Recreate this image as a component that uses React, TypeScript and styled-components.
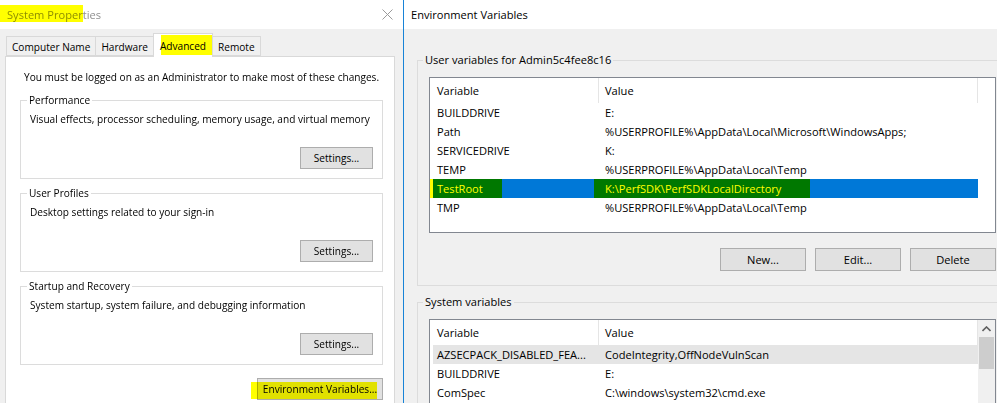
import React from "react";
import styled, { createGlobalStyle } from "styled-components";

const GlobalStyle = createGlobalStyle`
  html, body {
    margin: 0;
    padding: 0;
  }
  body {
    width: 997px;
    height: 403px;
    overflow: hidden;
    background: #f0f0f0;
    font-family: "Open Sans", "Liberation Sans", Arial, sans-serif;
    font-size: 11px;
    color: #000;
  }
  * {
    box-sizing: border-box;
  }
`;

const Screen = styled.div`
  display: flex;
  width: 997px;
  height: 403px;
  overflow: hidden;
`;

const Window = styled.div<{ $width: number; $fontSize: number; $active?: boolean }>`
  position: relative;
  flex: none;
  width: ${(p) => p.$width}px;
  display: flex;
  flex-direction: column;
  font-size: ${(p) => p.$fontSize}px;
  background: #f0f0f0;
  border-left: ${(p) => (p.$active ? "1px solid #1883d7" : "none")};
`;

const TitleBar = styled.div`
  position: relative;
  flex: none;
  height: 29px;
  display: flex;
  align-items: center;
  padding-left: 7px;
  background: #fff;
`;

const TitleText = styled.span<{ $inactive?: boolean }>`
  color: ${(p) => (p.$inactive ? "#8f8f8f" : "#000")};
  font-size: 11.1px;
  line-height: 15px;
`;

const CloseGlyph = styled.svg`
  margin-left: auto;
  margin-right: 10px;
  margin-top: -1px;
`;

// yellow highlighter stroke laid over the screenshot
const Marker = styled.span<{ $x: number; $y: number; $w: number; $h: number }>`
  position: absolute;
  left: ${(p) => p.$x}px;
  top: ${(p) => p.$y}px;
  width: ${(p) => p.$w}px;
  height: ${(p) => p.$h}px;
  background: #ffff00;
  mix-blend-mode: multiply;
  pointer-events: none;
`;

/* ---------- System Properties ---------- */

const SheetBody = styled.div`
  flex: 1;
  display: flex;
  flex-direction: column;
  padding: 4px 8px 0 5px;
`;

const TabStrip = styled.div`
  display: flex;
  align-items: flex-end;
  height: 23px;
  padding-left: 2px;
`;

const Tab = styled.div<{ $selected?: boolean }>`
  position: relative;
  height: ${(p) => (p.$selected ? 24 : 20)}px;
  margin-bottom: ${(p) => (p.$selected ? -1 : 0)}px;
  margin-left: -1px;
  padding: ${(p) => (p.$selected ? "0 6px" : "2px 5px 0")};
  display: flex;
  align-items: center;
  border: 1px solid #d9d9d9;
  border-bottom: ${(p) => (p.$selected ? "none" : "1px solid #d9d9d9")};
  background: ${(p) => (p.$selected ? "#fff" : "#f0f0f0")};
  white-space: nowrap;
`;

const TabPanel = styled.div`
  flex: 1;
  display: flex;
  flex-direction: column;
  gap: 7px;
  padding: 13px 11px 0 14px;
  background: #fff;
  border: 1px solid #d9d9d9;
  border-bottom: none;
`;

const Notice = styled.div`
  margin: 0 0 1px 4px;
  line-height: 15px;
  white-space: nowrap;
`;

const GroupBox = styled.fieldset<{ $pad?: string }>`
  margin: 0;
  min-width: 0;
  padding: ${(p) => p.$pad || "0 9px 9px 6px"};
  border: 1px solid #dcdcdc;
  display: flex;
  flex-direction: column;
`;

const Legend = styled.legend`
  padding: 0 2px;
  line-height: 14px;
  white-space: nowrap;
`;

const GroupText = styled.div`
  margin: 5px 0 0 3px;
  line-height: 15px;
  white-space: nowrap;
`;

const ButtonRow = styled.div<{ $top: number; $gap?: number; $width?: number }>`
  display: flex;
  justify-content: flex-end;
  gap: ${(p) => p.$gap || 0}px;
  margin-top: ${(p) => p.$top}px;
  width: ${(p) => (p.$width ? `${p.$width}px` : "auto")};
  margin-left: ${(p) => (p.$width ? "6px" : "0")};
`;

const PushButton = styled.button<{ $w: number; $h?: number }>`
  position: relative;
  width: ${(p) => p.$w}px;
  height: ${(p) => p.$h || 22}px;
  padding: 0;
  background: #e1e1e1;
  border: 1px solid #adadad;
  font: inherit;
  color: #000;
  white-space: nowrap;
`;

/* ---------- Environment Variables ---------- */

const EnvBody = styled.div`
  flex: 1;
  display: flex;
  flex-direction: column;
  gap: 9px;
  padding: 24px 0 0 13px;
`;

const WideGroup = styled(GroupBox)`
  width: 640px;
`;

const ListView = styled.div<{ $h: number }>`
  display: flex;
  width: 567px;
  height: ${(p) => p.$h}px;
  margin: 10px 0 0 6px;
  background: #fff;
  border: 1px solid #828790;
  overflow: hidden;
`;

const ListInner = styled.div`
  flex: 1;
  padding-left: 2px;
`;

const ListRow = styled.div<{ $state?: "selected" | "hover"; $header?: boolean }>`
  position: relative;
  display: grid;
  grid-template-columns: 166px 379px;
  height: ${(p) => (p.$header ? 25 : 19)}px;
  line-height: ${(p) => (p.$header ? 25 : 19)}px;
  margin-left: 1px;
  width: 545px;
  color: ${(p) => (p.$state === "selected" ? "#fff" : "#000")};
  background: ${(p) =>
    p.$state === "selected" ? "#0078d7" : p.$state === "hover" ? "#e5e5e5" : "transparent"};
`;

const Cell = styled.div<{ $first?: boolean; $header?: boolean }>`
  padding-left: ${(p) => (p.$first ? 4 : 6)}px;
  white-space: nowrap;
  overflow: hidden;
  border-right: ${(p) => (p.$header ? "1px solid #e5e5e5" : "none")};
`;

const ScrollBar = styled.div`
  flex: none;
  width: 17px;
  display: flex;
  flex-direction: column;
  background: #f0f0f0;
`;

const ScrollArrow = styled.div`
  height: 17px;
  display: flex;
  align-items: center;
  justify-content: center;
`;

const ScrollThumb = styled.div`
  height: 32px;
  margin: 0 1px;
  background: #cdcdcd;
`;

type Row = {
  name: string;
  value: string;
  state?: "selected" | "hover";
  marks?: { x: number; w: number }[];
};

const userVars: Row[] = [
  { name: "BUILDDRIVE", value: "E:" },
  { name: "Path", value: "%USERPROFILE%\\AppData\\Local\\Microsoft\\WindowsApps;" },
  { name: "SERVICEDRIVE", value: "K:" },
  { name: "TEMP", value: "%USERPROFILE%\\AppData\\Local\\Temp" },
  {
    name: "TestRoot",
    value: "K:\\PerfSDK\\PerfSDKLocalDirectory",
    state: "selected",
    marks: [
      { x: -3, w: 72 },
      { x: 161, w: 216 },
    ],
  },
  { name: "TMP", value: "%USERPROFILE%\\AppData\\Local\\Temp" },
];

const systemVars: Row[] = [
  { name: "AZSECPACK_DISABLED_FEA...", value: "CodeIntegrity,OffNodeVulnScan", state: "hover" },
  { name: "BUILDDRIVE", value: "E:" },
  { name: "ComSpec", value: "C:\\windows\\system32\\cmd.exe" },
];

function VariableList({ rows, height, scroll }: { rows: Row[]; height: number; scroll?: boolean }) {
  return (
    <ListView $h={height}>
      <ListInner>
        <ListRow $header>
          <Cell $first $header>Variable</Cell>
          <Cell $header>Value</Cell>
        </ListRow>
        {rows.map((r) => (
          <ListRow key={r.name} $state={r.state}>
            <Cell $first>{r.name}</Cell>
            <Cell>{r.value}</Cell>
            {r.marks?.map((m) => (
              <Marker key={m.x} $x={m.x} $y={0} $w={m.w} $h={19} />
            ))}
          </ListRow>
        ))}
      </ListInner>
      {scroll && (
        <ScrollBar>
          <ScrollArrow>
            <svg width="9" height="6" viewBox="0 0 9 6">
              <polyline points="0.5,5 4.5,1 8.5,5" fill="none" stroke="#606060" strokeWidth="1.6" />
            </svg>
          </ScrollArrow>
          <ScrollThumb />
        </ScrollBar>
      )}
    </ListView>
  );
}

function SettingsGroup({ title, text }: { title: string; text: string }) {
  return (
    <GroupBox>
      <Legend>{title}</Legend>
      <GroupText>{text}</GroupText>
      <ButtonRow $top={20}>
        <PushButton $w={73}>Settings...</PushButton>
      </ButtonRow>
    </GroupBox>
  );
}

export default function App() {
  return (
    <>
      <GlobalStyle />
      <Screen>
        <Window $width={403} $fontSize={10.1}>
          <TitleBar>
            <TitleText $inactive>System Properties</TitleText>
            <CloseGlyph width="11" height="11" viewBox="0 0 11 11">
              <path d="M0.5 0.5 L10.5 10.5 M10.5 0.5 L0.5 10.5" stroke="#9a9a9a" strokeWidth="1" />
            </CloseGlyph>
            <Marker $x={0} $y={5} $w={83} $h={17} />
          </TitleBar>
          <SheetBody>
            <TabStrip>
              <Tab>Computer Name</Tab>
              <Tab>Hardware</Tab>
              <Tab $selected>
                Advanced
                <Marker $x={7} $y={1} $w={51} $h={20} />
              </Tab>
              <Tab>Remote</Tab>
            </TabStrip>
            <TabPanel>
              <Notice>You must be logged on as an Administrator to make most of these changes.</Notice>
              <SettingsGroup
                title="Performance"
                text="Visual effects, processor scheduling, memory usage, and virtual memory"
              />
              <SettingsGroup title="User Profiles" text="Desktop settings related to your sign-in" />
              <SettingsGroup
                title="Startup and Recovery"
                text="System startup, system failure, and debugging information"
              />
              <ButtonRow $top={6}>
                <PushButton $w={126}>
                  Environment Variables...
                  <Marker $x={-7} $y={3} $w={126} $h={17} />
                </PushButton>
              </ButtonRow>
            </TabPanel>
          </SheetBody>
        </Window>

        <Window $width={660} $fontSize={11.1} $active>
          <TitleBar>
            <TitleText>Environment Variables</TitleText>
          </TitleBar>
          <EnvBody>
            <WideGroup $pad="0 0 14px 5px">
              <Legend>User variables for Admin5c4fee8c16</Legend>
              <VariableList rows={userVars} height={156} />
              <ButtonRow $top={15} $gap={9} $width={567}>
                <PushButton $w={86} $h={23}>New...</PushButton>
                <PushButton $w={86} $h={23}>Edit...</PushButton>
                <PushButton $w={86} $h={23}>Delete</PushButton>
              </ButtonRow>
            </WideGroup>
            <WideGroup $pad="0 0 14px 5px">
              <Legend>System variables</Legend>
              <VariableList rows={systemVars} height={200} scroll />
            </WideGroup>
          </EnvBody>
        </Window>
      </Screen>
    </>
  );
}
